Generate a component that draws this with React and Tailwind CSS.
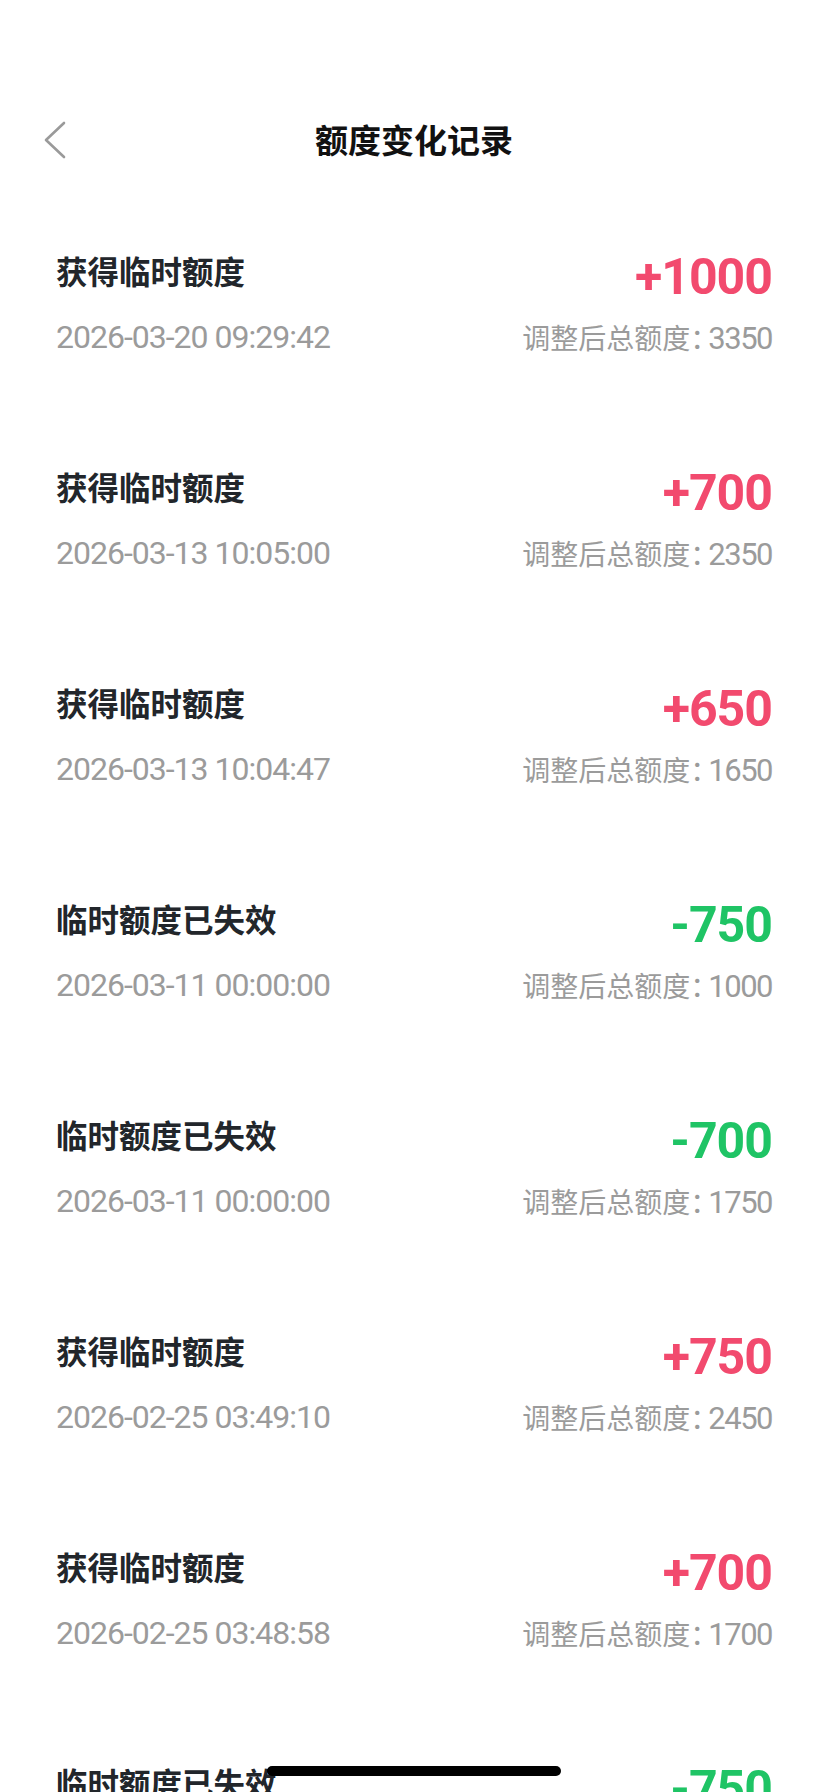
import React from 'react';

const records = [
    { title: '获得临时额度', amount: '+1000', time: '2026-03-20 09:29:42', total: 3350 },
    { title: '获得临时额度', amount: '+700', time: '2026-03-13 10:05:00', total: 2350 },
    { title: '获得临时额度', amount: '+650', time: '2026-03-13 10:04:47', total: 1650 },
    { title: '临时额度已失效', amount: '-750', time: '2026-03-11 00:00:00', total: 1000 },
    { title: '临时额度已失效', amount: '-700', time: '2026-03-11 00:00:00', total: 1750 },
    { title: '获得临时额度', amount: '+750', time: '2026-02-25 03:49:10', total: 2450 },
    { title: '获得临时额度', amount: '+700', time: '2026-02-25 03:48:58', total: 1700 },
    { title: '临时额度已失效', amount: '-750', time: '2026-02-18 00:00:00', total: 950 },
];

const BackIcon = () => (
    <svg width="22" height="38" viewBox="0 0 22 38" fill="none">
        <polyline points="20,2 2,19 20,36" stroke="#9a9a9a" strokeWidth="2.6" strokeLinecap="round" strokeLinejoin="round" />
    </svg>
);

const RecordRow = ({ record }) => {
    const isPlus = record.amount.startsWith('+');
    return (
        <div className="flex justify-between items-start h-[216px]">
            <div className="flex flex-col">
                <div className="-mt-[2px] text-[31.5px] leading-[40px] font-bold text-[#22262b] font-['Noto_Sans_CJK_SC',sans-serif]">
                    {record.title}
                </div>
                <div className="mt-[29px] text-[32px] leading-[36px] tracking-[-1px] text-[#9b9b9b] font-['Roboto',sans-serif]">
                    {record.time}
                </div>
            </div>
            <div className="flex flex-col items-end">
                <div
                    className={`-mt-[1px] text-[50px] leading-[52px] tracking-[-1px] font-bold font-['Roboto',sans-serif] ${
                        isPlus ? 'text-[#f24a6e]' : 'text-[#1fc465]'
                    }`}
                >
                    {record.amount}
                </div>
                <div className="mt-[18px] text-[28px] leading-[36px] text-[#9b9b9b] font-['Roboto','Noto_Sans_CJK_SC',sans-serif]">
                    调整后总额度<span className="tracking-[-13px]">：</span>
                    <span className="ml-[3px] text-[31px] leading-[36px] tracking-[-1.5px]">{record.total}</span>
                </div>
            </div>
        </div>
    );
};

const App = () => {
    return (
        <div className="relative w-[828px] h-[1792px] overflow-hidden bg-white">
            {/* header */}
            <div className="pt-[96px]">
                <div className="grid grid-cols-[1fr_auto_1fr] items-center h-[88px] px-[44px]">
                    <div className="flex items-center">
                        <BackIcon />
                    </div>
                    <h1 className="text-[33px] font-bold text-[#111111] font-['Noto_Sans_CJK_SC',sans-serif]">
                        额度变化记录
                    </h1>
                    <div />
                </div>
            </div>

            {/* list */}
            <div className="pt-[68px] px-[56px]">
                {records.map((record, i) => (
                    <RecordRow key={i} record={record} />
                ))}
            </div>

            {/* home indicator */}
            <div className="absolute left-[267px] bottom-[16px] w-[294px] h-[10px] rounded-full bg-black" />
        </div>
    );
};

export default App;
